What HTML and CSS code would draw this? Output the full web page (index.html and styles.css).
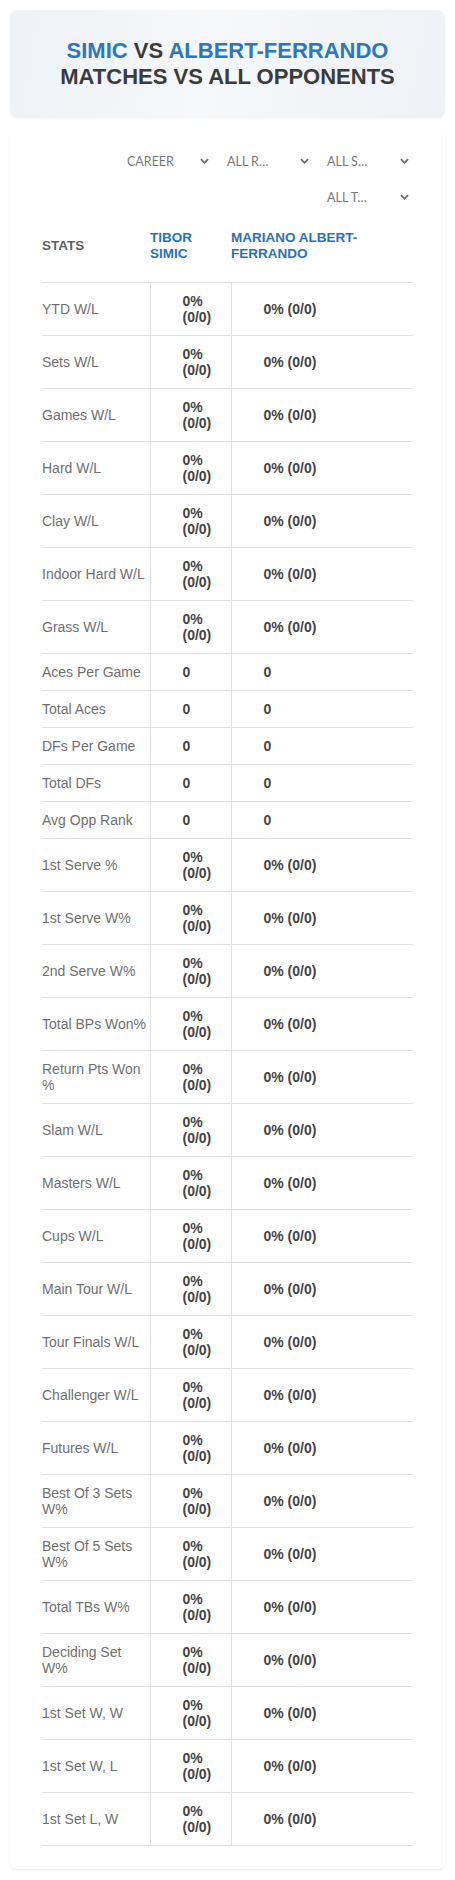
FILE: index.html
```html
<!DOCTYPE html>
<html>
<head>
  <title>Simic vs Albert-Ferrando</title>
  <link rel="stylesheet" href="styles.css">
</head>

<body>
  <div class="page">
    <header class="title-card">
      <h1>
        <span class="player">Simic</span> vs <span class="player">Albert-Ferrando</span><br>
        Matches vs all opponents
      </h1>
    </header>

    <main class="stats-card">
      <div class="filters">
        <div class="filter"><span class="filter__label">Career</span><svg class="filter__arrow" viewBox="0 0 10 6"><polyline points="1,1 5,5 9,1"/></svg></div>
        <div class="filter"><span class="filter__label">All R…</span><svg class="filter__arrow" viewBox="0 0 10 6"><polyline points="1,1 5,5 9,1"/></svg></div>
        <div class="filter"><span class="filter__label">All S…</span><svg class="filter__arrow" viewBox="0 0 10 6"><polyline points="1,1 5,5 9,1"/></svg></div>
        <div class="filter"><span class="filter__label">All T…</span><svg class="filter__arrow" viewBox="0 0 10 6"><polyline points="1,1 5,5 9,1"/></svg></div>
      </div>

      <table class="stats-table">
        <thead>
          <tr>
            <th class="stats-table__head stats-table__head--label">Stats</th>
            <th class="stats-table__head">Tibor Simic</th>
            <th class="stats-table__head">Mariano Albert-Ferrando</th>
          </tr>
        </thead>
        <tbody id="stats-body"></tbody>
      </table>
    </main>
  </div>

  <script>
    const statsBody = document.getElementById('stats-body');

    const stats = [
      ['YTD W/L', '0% (0/0)'],
      ['Sets W/L', '0% (0/0)'],
      ['Games W/L', '0% (0/0)'],
      ['Hard W/L', '0% (0/0)'],
      ['Clay W/L', '0% (0/0)'],
      ['Indoor Hard W/L', '0% (0/0)'],
      ['Grass W/L', '0% (0/0)'],
      ['Aces Per Game', '0'],
      ['Total Aces', '0'],
      ['DFs Per Game', '0'],
      ['Total DFs', '0'],
      ['Avg Opp Rank', '0'],
      ['1st Serve %', '0% (0/0)'],
      ['1st Serve W%', '0% (0/0)'],
      ['2nd Serve W%', '0% (0/0)'],
      ['Total BPs Won%', '0% (0/0)'],
      ['Return Pts Won %', '0% (0/0)'],
      ['Slam W/L', '0% (0/0)'],
      ['Masters W/L', '0% (0/0)'],
      ['Cups W/L', '0% (0/0)'],
      ['Main Tour W/L', '0% (0/0)'],
      ['Tour Finals W/L', '0% (0/0)'],
      ['Challenger W/L', '0% (0/0)'],
      ['Futures W/L', '0% (0/0)'],
      ['Best Of 3 Sets W%', '0% (0/0)'],
      ['Best Of 5 Sets W%', '0% (0/0)'],
      ['Total TBs W%', '0% (0/0)'],
      ['Deciding Set W%', '0% (0/0)'],
      ['1st Set W, W', '0% (0/0)'],
      ['1st Set W, L', '0% (0/0)'],
      ['1st Set L, W', '0% (0/0)']
    ];

    stats.forEach(([label, value]) => {
      const tr = document.createElement('tr');
      tr.innerHTML = `
        <td class="stats-table__label">${label}</td>
        <td class="stats-table__value">${value}</td>
        <td class="stats-table__value">${value}</td>
      `;
      statsBody.appendChild(tr);
    });
  </script>
</body>

</html>
```

FILE: styles.css
```css
* {
  box-sizing: border-box;
}

body {
  margin: 0;
  font-family: "Liberation Sans", Arial, sans-serif;
  font-size: 14px;
  color: #444444;
  background-color: #ffffff;
}

.page {
  padding: 10px;
}

.title-card {
  height: 108px;
  border-radius: 8px;
  background: linear-gradient(100deg, #eef2f6 0%, #f6f8fa 45%, #eef2f6 100%);
  box-shadow: 0px 1px 3px rgba(0, 0, 0, 0.04);
  display: flex;
  align-items: center;
  justify-content: center;
}

h1 {
  margin: 0;
  font-size: 22px;
  line-height: 26px;
  text-align: center;
  text-transform: uppercase;
  color: #3b3b3b;
}

.player {
  color: #2b78bd;
}

.stats-card {
  margin-top: 10px;
  padding: 19px 32px 23px;
  background-color: #ffffff;
  border-radius: 6px;
  box-shadow: 0px 1px 2px rgba(0, 0, 0, 0.08);
}

.filters {
  display: flex;
  flex-wrap: wrap;
  justify-content: flex-end;
  gap: 8px 4px;
}

.filter {
  width: 96px;
  height: 28px;
  padding: 0 4px 0 10px;
  display: flex;
  align-items: center;
  justify-content: space-between;
  font-family: Lato, "Open Sans", sans-serif;
  font-size: 12.5px;
  color: #777777;
  text-transform: uppercase;
}

.filter__label {
  white-space: nowrap;
}

.filter__arrow {
  width: 9px;
  height: 6px;
  fill: none;
  stroke: #6a6a6a;
  stroke-width: 2;
}

.stats-table {
  width: 100%;
  table-layout: fixed;
  border-collapse: collapse;
}

.stats-table__head {
  padding: 19px 4px 20px 0;
  font-size: 13.5px;
  line-height: 16px;
  text-align: left;
  text-transform: uppercase;
  vertical-align: middle;
  color: #2a72b5;
  border-bottom: 1px solid #e2e2e2;
}

.stats-table__head:nth-child(1) {
  width: 108px;
}

.stats-table__head:nth-child(2) {
  width: 81px;
}

.stats-table__head--label {
  color: #5f5f5f;
}

.stats-table__label,
.stats-table__value {
  padding: 10px 1px 10px 0;
  line-height: 16px;
  vertical-align: middle;
  border-bottom: 1px solid #e2e2e2;
}

.stats-table__label {
  color: #6f6f6f;
}

.stats-table__value {
  padding-left: 32px;
  font-weight: bold;
  color: #444444;
  border-left: 1px solid #e2e2e2;
}
```
